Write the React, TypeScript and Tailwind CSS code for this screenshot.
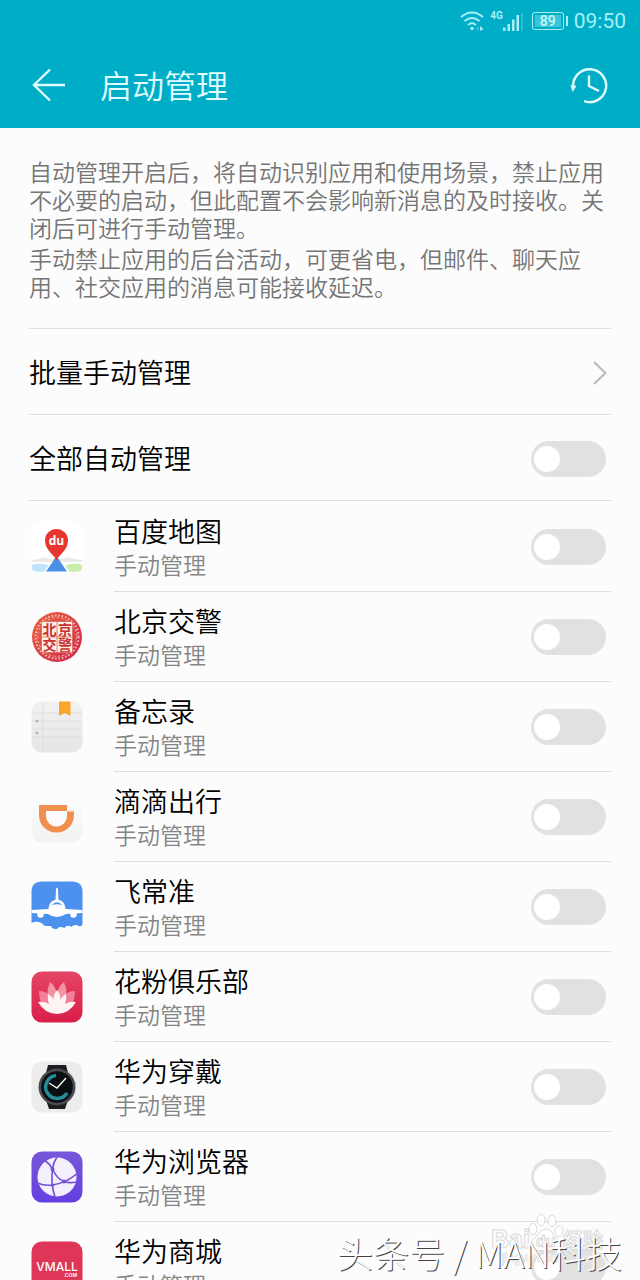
import { useState, type ReactNode } from "react";

function MapIcon() {
  return (
    <svg viewBox="0 0 52 52" className="size-[52px]" aria-hidden="true">
      <rect width="52" height="52" rx="10" fill="#fff" />
      <path d="M1 39 L8 38 L14 36.500 L20 38 H32 L38 36.500 L44 38 L51 39 V41 H1Z" fill="#e9e9e6" />
      <path d="M1 49 V44 Q9 41 17.500 44.500 L13 50.500 Q6 52 1 49Z" fill="#bfe3fb" />
      <path d="M51 49 V44 Q43 41 34 44.500 L38.500 50.500 Q46 52 51 49Z" fill="#c8eeb0" />
      <path d="M25.500 35 L36 50.500 H15Z" fill="#4a90e8" />
      <path d="M25.500 40 C24.500 34 14 30 14 19.500 A11.500 11.500 0 0 1 37 19.500 C37 30 26.500 34 25.500 40Z" fill="#e8352e" />
      <text x="25.500" y="24" textAnchor="middle" fill="#fff" className="font-['Open_Sans',sans-serif] text-[12px] font-bold">du</text>
    </svg>
  );
}

function PoliceIcon() {
  return (
    <svg viewBox="0 0 52 52" className="size-[52px]" aria-hidden="true">
      <defs>
        <linearGradient id="police" x1="0" y1="0" x2="1" y2="1">
          <stop offset="0" stopColor="#e8653c" />
          <stop offset="1" stopColor="#cf2450" />
        </linearGradient>
      </defs>
      <circle cx="26" cy="26" r="25" fill="url(#police)" />
      <circle cx="26" cy="26" r="21.500" fill="none" stroke="#f6c3b4" strokeWidth="2" strokeDasharray="1.500 1.900" />
      <circle cx="26" cy="26" r="19.300" fill="none" stroke="#f3b3a4" strokeWidth="1" strokeDasharray="2.500 2" />
      <rect x="10.500" y="10.500" width="31" height="31" fill="#fdeee8" />
      <path d="M26 10.500V41.500M10.500 26H41.500M10.500 10.500H41.500V41.500H10.500Z" stroke="#dd6a58" strokeWidth="0.800" fill="none" />
      <g fill="#c9302e" className="font-['Noto_Sans_CJK_SC',sans-serif] text-[14px] font-bold" textAnchor="middle">
        <text x="18.500" y="23.500">北</text>
        <text x="34" y="23.500">京</text>
        <text x="18.500" y="39">交</text>
        <text x="34" y="39">警</text>
      </g>
    </svg>
  );
}

function NotesIcon() {
  return (
    <svg viewBox="0 0 52 52" className="size-[52px]" aria-hidden="true">
      <defs>
        <linearGradient id="paper" x1="0" y1="0" x2="0" y2="1">
          <stop offset="0" stopColor="#f1f1f1" />
          <stop offset="1" stopColor="#e6e6e6" />
        </linearGradient>
      </defs>
      <rect x="0.500" y="0.500" width="51" height="51" rx="11" fill="url(#paper)" />
      <path d="M1 12H51M1 20H51M1 28H51M1 36H51" stroke="#dcdcdc" strokeWidth="1" />
      <path d="M12 1V51" stroke="#dcdcdc" strokeWidth="0.800" />
      <circle cx="6" cy="20" r="1.300" fill="#aaa" />
      <circle cx="6" cy="32" r="1.300" fill="#aaa" />
      <path d="M28 0.500H39.500V15L33.700 12L28 15Z" fill="#fba52d" />
    </svg>
  );
}

function RideIcon() {
  return (
    <svg viewBox="0 0 52 52" className="size-[52px]" aria-hidden="true">
      <defs>
        <linearGradient id="ride" x1="0" y1="0" x2="0" y2="1">
          <stop offset="0" stopColor="#fdfdfd" />
          <stop offset="1" stopColor="#f2f2f2" />
        </linearGradient>
      </defs>
      <rect x="0.500" y="0.500" width="51" height="51" rx="10" fill="url(#ride)" />
      <path d="M8 14H37V19.500H43V24C43 34 35.500 41.500 25.500 41.500C15.500 41.500 8 34 8 24Z" fill="#f0904e" />
      <path d="M15 20H36V25A10.500 10.500 0 0 1 15 25Z" fill="#fbfbfb" />
      <path d="M36.500 14V20H43" fill="none" stroke="#fbfbfb" strokeWidth="1" />
    </svg>
  );
}

function FlightIcon() {
  return (
    <svg viewBox="0 0 52 52" className="size-[52px]" aria-hidden="true">
      <path d="M11 0.500H41Q51.500 0.500 51.500 11V43Q51 46 47.500 45C45 43 42 44 40.500 46C38 44 35 44.500 33.500 47C30 45.500 28 45.500 26 48C22 48 20.500 47 20.500 45.500C18 44 15 46 12.500 44C10 40 4 40 0.500 42V11Q0.500 0.500 11 0.500Z" fill="#4c91ee" />
      <path d="M25 8Q26 5 27 8L27.500 19C32 19.500 34 23 34.500 28L51.500 29V32L35 33Q26 39 17 33L0.500 32V29L17.500 28C18 23 20 19.500 24.500 19Z" fill="#fff" />
      <circle cx="9.500" cy="33.500" r="3.200" fill="#fff" />
      <circle cx="42.500" cy="33.500" r="3.200" fill="#fff" />
      <path d="M20.500 24Q26 18.500 31.500 24Q26 22.500 20.500 24Z" fill="#4c91ee" />
    </svg>
  );
}

function LotusIcon() {
  return (
    <svg viewBox="0 0 52 52" className="size-[52px]" aria-hidden="true">
      <defs>
        <linearGradient id="lotus" x1="0" y1="0" x2="0" y2="1">
          <stop offset="0" stopColor="#e54565" />
          <stop offset="1" stopColor="#d91e49" />
        </linearGradient>
      </defs>
      <rect x="0.500" y="0.500" width="51" height="51" rx="10.500" fill="url(#lotus)" />
      <path d="M8 20Q15 19 21 27L26 42Q8 40 8 20ZM44 20Q37 19 31 27L26 42Q44 40 44 20Z" fill="#f07f97" />
      <path d="M19 11Q26 16 26 27L21 38Q13 24 19 11ZM33 11Q26 16 26 27L31 38Q39 24 33 11Z" fill="#f493a6" />
      <path d="M7 31Q13 30 18 33Q16 28 17 23Q21 25 22.500 29Q22.500 23 26 19Q29.500 23 29.500 29Q31 25 35 23Q36 28 34 33Q39 30 45 31Q38 43 26 43Q14 43 7 31Z" fill="#fff3f4" />
    </svg>
  );
}

function WatchIcon() {
  return (
    <svg viewBox="0 0 52 52" className="size-[52px]" aria-hidden="true">
      <rect x="0.500" y="0.500" width="51" height="51" rx="10.500" fill="#ececec" />
      <path d="M17 4H35L38 16H14ZM14 36H38L34 48H18Z" fill="#1d1d1f" />
      <circle cx="26" cy="26" r="18.500" fill="#4a4b4f" />
      <circle cx="26" cy="26" r="15.800" fill="#0b0f12" />
      <path d="M25 14.500A11.500 11.500 0 1 0 36 32" fill="none" stroke="#248b99" strokeWidth="3.500" />
      <path d="M35 17L26 27L18 22" fill="none" stroke="#f6f6f6" strokeWidth="1.400" />
      <circle cx="44" cy="22" r="0.800" fill="#777" />
    </svg>
  );
}

function BrowserIcon() {
  return (
    <svg viewBox="0 0 52 52" className="size-[52px]" aria-hidden="true">
      <defs>
        <linearGradient id="browser" x1="0" y1="0" x2="0" y2="1">
          <stop offset="0" stopColor="#7757d8" />
          <stop offset="1" stopColor="#6440e2" />
        </linearGradient>
      </defs>
      <rect x="0.500" y="0.500" width="51" height="51" rx="10.500" fill="url(#browser)" />
      <circle cx="26" cy="26" r="19.500" fill="#f4effc" />
      <g fill="none" stroke="#7150d6" strokeWidth="1.600">
        <path d="M26 6Q22 12 21.500 18Q19.500 33 24 46" />
        <path d="M6 32Q14 35 21.500 34Q35 32 45.500 23" />
        <path d="M14 9.500Q19 13 21.500 18Q26 28 33 30.500Q39 32.500 45 31" />
      </g>
      <g fill="#7150d6">
        <circle cx="21.500" cy="18" r="2" />
        <circle cx="33" cy="30.500" r="2" />
        <circle cx="21.500" cy="34" r="1.600" />
      </g>
    </svg>
  );
}

function MallIcon() {
  return (
    <svg viewBox="0 0 52 52" className="size-[52px]" aria-hidden="true">
      <rect x="0.500" y="0.500" width="51" height="51" rx="10.500" fill="#df3657" />
      <text x="26" y="30" textAnchor="middle" fill="#fff" className="font-[Inter,sans-serif] text-[12px] font-medium">VMALL</text>
      <text x="46" y="36" textAnchor="end" fill="#fff" className="font-[Inter,sans-serif] text-[5px] font-semibold">.COM</text>
    </svg>
  );
}

function Switch({ label }: { label: string }) {
  const [on, setOn] = useState(false);
  return (
    <button
      type="button"
      role="switch"
      aria-checked={on}
      aria-label={label}
      onClick={() => setOn(!on)}
      className={`mr-[5px] flex h-9 w-[75px] shrink-0 items-center rounded-full px-[3px] ${on ? "justify-end bg-[#00adc7]" : "bg-[#e1e1e1]"}`}
    >
      <span className="size-[26px] rounded-full bg-white" />
    </button>
  );
}

const apps: { name: string; icon: ReactNode }[] = [
  { name: "百度地图", icon: <MapIcon /> },
  { name: "北京交警", icon: <PoliceIcon /> },
  { name: "备忘录", icon: <NotesIcon /> },
  { name: "滴滴出行", icon: <RideIcon /> },
  { name: "飞常准", icon: <FlightIcon /> },
  { name: "花粉俱乐部", icon: <LotusIcon /> },
  { name: "华为穿戴", icon: <WatchIcon /> },
  { name: "华为浏览器", icon: <BrowserIcon /> },
  { name: "华为商城", icon: <MallIcon /> },
];

function StatusBar() {
  return (
    <div className="flex h-[42px] items-center justify-end pr-[14px] text-[#a5f0f7]">
      <svg viewBox="0 0 24 20" className="h-5 w-6" fill="none" stroke="currentColor" strokeWidth="2" aria-hidden="true">
        <path d="M1 6Q12 -3 23 6M4.500 10Q12 4 19.500 10M8 14Q12 10.500 16 14" />
        <circle cx="12" cy="17.500" r="1.800" fill="currentColor" stroke="none" />
        <path d="M20 15L23.500 18L20 20Z" fill="currentColor" stroke="none" />
        <path d="M18.500 15L16 17.500L18.500 20Z" fill="currentColor" stroke="none" opacity="0.400" />
      </svg>
      <span className="ml-[6px] self-start pt-[9px] font-[Roboto,sans-serif] text-[10px] leading-[14px] font-bold">4G</span>
      <svg viewBox="0 0 20 20" className="h-5 w-5" fill="currentColor" aria-hidden="true">
        <path d="M0 16.500H2.500V20H0ZM4.500 13H7V20H4.500ZM9 8.500H11.500V20H9ZM13.500 4H16V20H13.500Z" />
        <path d="M18 2H20V20H18Z" opacity="0.250" />
      </svg>
      <span className="ml-[9px] flex h-[18px] w-8 items-center rounded-[3px] border border-current p-[2px]">
        <span className="flex h-full w-full items-center justify-center bg-[#3cc4d8] font-[Roboto,sans-serif] text-[14px] leading-[14px] font-medium text-[#c4fafd]">89</span>
      </span>
      <span className="ml-[2px] h-[10px] w-[2px] bg-current" />
      <span className="ml-[6px] font-[Roboto,sans-serif] text-[21px] leading-6">09:50</span>
    </div>
  );
}

function Watermarks() {
  return (
    <div className="pointer-events-none">
      <svg viewBox="0 0 116 60" className="absolute right-[34px] bottom-[11px] h-[60px] w-[116px]" fill="#fff" fillOpacity="0.800" stroke="#d9d9d9" strokeWidth="1" aria-hidden="true">
        <text x="1" y="39" className="font-['Liberation_Sans',sans-serif] text-[25px] font-bold">Bai</text>
        <path d="M41 38Q41 30 47 27Q51 20 56 20Q61 20 64 27Q71 31 70 38Q67 43 56 41Q43 43 41 38Z" />
        <ellipse cx="43" cy="20" rx="4" ry="5.500" />
        <ellipse cx="51" cy="11" rx="4" ry="5.500" />
        <ellipse cx="62" cy="12" rx="4" ry="5.500" />
        <ellipse cx="69" cy="22" rx="4" ry="5.500" />
        <text x="46" y="38" className="font-['Liberation_Sans',sans-serif] text-[16px] font-bold">du</text>
        <text x="73" y="39" className="font-['Noto_Sans_CJK_SC',sans-serif] text-[20px] font-bold">经验</text>
        <text x="12" y="53" stroke="#e6e6e6" className="font-['Liberation_Sans',sans-serif] text-[12px]">jingyan.baidu.com</text>
      </svg>
      <p className="absolute right-[18px] bottom-1 text-[36px] leading-[48px] font-light whitespace-nowrap text-white [text-shadow:1px_1px_0_#444]">
        头条号 / MAN科技
      </p>
    </div>
  );
}

export default function App() {
  return (
    <div className="relative flex h-screen flex-col overflow-hidden bg-[#fcfcfc] font-['Noto_Sans_CJK_SC',sans-serif] text-black">
      <header className="h-32 shrink-0 bg-[#00adc7]">
        <StatusBar />
        <div className="flex h-[86px] items-center pr-8 pl-8 text-[#e0fdff]">
          <button type="button" aria-label="返回">
            <svg viewBox="0 0 34 34" className="size-[34px]" fill="none" stroke="currentColor" strokeWidth="2.400" aria-hidden="true">
              <path d="M33 17H2M18 1.500L2 17L18 32.500" />
            </svg>
          </button>
          <h1 className="ml-[34px] pb-[2px] text-[32px] leading-10 font-[350]">启动管理</h1>
          <button type="button" aria-label="历史记录" className="ml-auto">
            <svg viewBox="0 0 38 38" className="size-[38px]" fill="none" stroke="currentColor" strokeWidth="2.400" aria-hidden="true">
              <path d="M3.200 21A16.500 16.500 0 1 1 14 35.200" />
              <path d="M19 9.500V20L29 25" />
              <path d="M0.500 19L6.500 20L2.500 26Z" fill="currentColor" stroke="none" />
            </svg>
          </button>
        </div>
      </header>
      <main className="min-h-0 flex-1 overflow-y-auto pr-[29px] pl-[29px] [scrollbar-width:none]">
        <div className="flex flex-col gap-[3px] pt-[29px] pb-7 text-[23px] leading-7 font-[350] text-[#757575]">
          <p>自动管理开启后，将自动识别应用和使用场景，禁止应用不必要的启动，但此配置不会影响新消息的及时接收。关闭后可进行手动管理。</p>
          <p>手动禁止应用的后台活动，可更省电，但邮件、聊天应用、社交应用的消息可能接收延迟。</p>
        </div>
        <button type="button" className="flex h-[86px] w-full items-center justify-between border-t border-[#dedede] pt-[2px] text-left text-[27px] font-[350]">
          <span>批量手动管理</span>
          <svg viewBox="0 0 14 24" className="mr-1 h-6 w-[14px]" fill="none" stroke="#bababa" strokeWidth="2" aria-hidden="true">
            <path d="M1 1L12.500 12L1 23" />
          </svg>
        </button>
        <div className="flex h-[87px] items-center justify-between border-y border-[#dedede] pt-[2px] text-[27px] font-[350]">
          <span>全部自动管理</span>
          <Switch label="全部自动管理" />
        </div>
        <ul className="pt-[1px]">
          {apps.map((app) => (
            <li key={app.name} className="flex h-[90px] items-center pl-[2px]">
              {app.icon}
              <div className="ml-[31px] flex h-full flex-1 items-center justify-between border-b border-[#dedede]">
                <div>
                  <h2 className="text-[27px] leading-[34px] font-[350]">{app.name}</h2>
                  <p className="text-[23px] leading-8 font-[350] text-[#858585]">手动管理</p>
                </div>
                <Switch label={app.name} />
              </div>
            </li>
          ))}
        </ul>
      </main>
      <Watermarks />
    </div>
  );
}
